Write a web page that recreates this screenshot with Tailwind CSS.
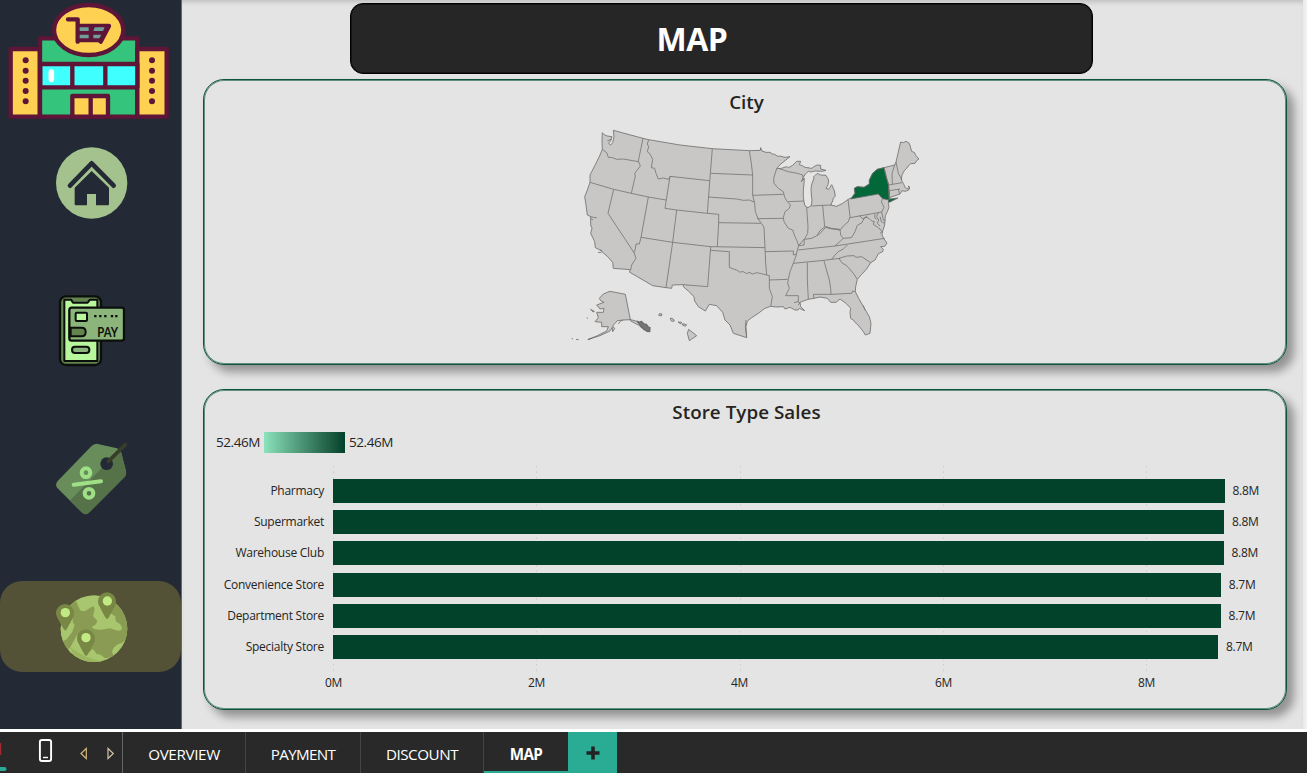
<!DOCTYPE html>
<html lang="en">
<head>
<meta charset="utf-8">
<title>Map</title>
<script src="https://cdn.jsdelivr.net/npm/@tailwindcss/browser@4"></script>
</head>
<body class="w-[1307px] h-[773px] overflow-hidden flex flex-col bg-white font-['Open_Sans','Noto_Sans',sans-serif] text-[#252423]">
<div class="flex h-[729px] bg-[#e4e4e4]">
  <aside class="w-[182px] shrink-0 bg-[#232a35] border-r border-[#666b72] flex flex-col items-center">
    <!-- store -->
    <svg class="w-[181px] h-[125px] shrink-0" viewBox="0 0 543 375">
      <g stroke="#5e1537" stroke-width="13" stroke-linejoin="round">
        <path fill="#34c47c" d="M120 115H412V350H120z"/>
        <path fill="#ffd152" d="M32 147H119V350H32zM412 147H500V350H412z"/>
        <path fill="#3fffff" d="M121 192H412V262H121z"/>
        <path d="M217 192V262M316 192V262" />
        <path fill="#ffd152" d="M217 288H324V350H217zM272 288V350"/>
        <ellipse cx="266" cy="90" rx="104" ry="75" fill="#ffd152"/>
      </g>
      <path d="M154 216V238" stroke="#fff" stroke-width="17" stroke-linecap="round"/>
      <path d="M204 58H233V125M238 78H327L302 125M233 120H305" fill="none" stroke="#5e1537" stroke-width="13" stroke-linecap="round" stroke-linejoin="round"/>
      <path d="M233 76H327L305 124H233z" fill="#5e1537"/>
      <path d="M239 82H266V93H239zM284 82H314L309 93H280zM239 104H266V115H239zM280 104H304L298 115H280z" fill="#709d97"/>
      <g fill="#5e1537"><circle cx="77" cy="181" r="9"/><circle cx="77" cy="212" r="9"/><circle cx="77" cy="242" r="9"/><circle cx="77" cy="273" r="9"/><circle cx="77" cy="304" r="9"/><circle cx="456" cy="181" r="9"/><circle cx="456" cy="212" r="9"/><circle cx="456" cy="242" r="9"/><circle cx="456" cy="273" r="9"/><circle cx="456" cy="304" r="9"/></g>
    </svg>
    <!-- home -->
    <svg class="w-[110px] h-[100px] mt-[10px] shrink-0 ml-[9px]" viewBox="0 0 330 300">
      <circle cx="155" cy="144" r="107" fill="#a4c28e"/>
      <path d="M90 152L155 85L221 152" fill="none" stroke="#232a35" stroke-width="14" stroke-linecap="round" stroke-linejoin="round"/>
      <path d="M104 158L155 108L207 158V208Q207 211 204 211H168V177H141V211H107Q104 211 104 208z" fill="#232a35"/>
    </svg>
    <!-- pay -->
    <svg class="w-[95px] h-[90px] mt-[50px] shrink-0 ml-[3px]" viewBox="0 0 285 270">
      <rect x="45" y="34" width="123" height="206" rx="18" fill="#64844f" stroke="#0b0f0b" stroke-width="7"/>
      <path d="M58 44H78L84 53H128L135 44H157V228H58z" fill="#b9f79d" stroke="#0b0f0b" stroke-width="6" stroke-linejoin="round"/>
      <rect x="73" y="68" width="164" height="99" rx="7" fill="#8bb57b" stroke="#0b0f0b" stroke-width="7"/>
      <rect x="92" y="83" width="34" height="25" rx="3" fill="#b9f79d" stroke="#0b0f0b" stroke-width="6"/>
      <path d="M77 128H110Q122 128 122 141Q122 154 110 154H77z" fill="#64844f" stroke="#0b0f0b" stroke-width="6"/>
      <rect x="81" y="185" width="52" height="19" rx="9" fill="#8bb57b" stroke="#0b0f0b" stroke-width="6"/>
      <path d="M151 90V97M166 90V97M181 90V97M201 90V97M214 90V97" stroke="#0b0f0b" stroke-width="7"/>
      <text x="157" y="156" font-size="41" font-weight="700" font-family="Lato" textLength="62" lengthAdjust="spacingAndGlyphs" fill="#0b0f0b">PAY</text>
    </svg>
    <!-- discount -->
    <svg class="w-[95px] h-[90px] mt-[60px] shrink-0 ml-[3px]" viewBox="0 0 285 270">
      <path d="M155 26L216 40Q226 44 229 54L243 109Q245 119 238 127L134 231Q123 244 110 232L37 159Q29 149 38 138L139 34Q146 26 155 26z" fill="#688d5a"/>
      <path d="M222 46Q228 49 229 54L243 109Q245 119 238 127L134 231Q123 244 110 232L76 196z" fill="#557249"/>
      <circle cx="185" cy="86" r="19" fill="#232a35"/>
      <path d="M190 79L241 29" stroke="#373e2a" stroke-width="11" stroke-linecap="round"/>
      <g fill="none" stroke="#9fe087"><circle cx="123" cy="113" r="13" stroke-width="12"/><circle cx="132" cy="175" r="13" stroke-width="12"/><path d="M86 149L168 139" stroke-width="12" stroke-linecap="round"/></g>
    </svg>
    <!-- map, selected page -->
    <div class="w-[181px] h-[91px] mt-[56px] shrink-0 rounded-[22px] bg-[#535136] overflow-hidden">
      <svg class="w-[181px] h-[92px]" viewBox="0 33 543 276">
        <defs><clipPath id="globe"><circle cx="282" cy="176" r="100"/></clipPath></defs>
        <g clip-path="url(#globe)">
          <path fill="#a7c66d" d="M170 70H390V280H170z"/>
          <path fill="#8a9b54" d="M196 88L228 94L240 120Q252 129 264 118L280 108L284 117L279 138L292 153Q290 165 275 170Q280 180 302 179L330 175Q352 185 363 181Q371 170 357 160Q342 153 347 140L332 130V70L400 120V200L380 207L365 219Q340 225 336 246L342 260L315 265L302 254H291L278 237L258 257L230 210L196 250L178 210L200 180L219 159L215 120z"/>
          <path fill="#a7c66d" d="M217 156L224 165L217 185L200 208L185 215L180 175zM232 193L208 237L195 242L240 275L315 270Q302 252 291 253L278 237L258 257z"/>
          <path fill="#9cb660" d="M210 232L260 262L310 276H230z"/>
        </g>
        <g fill="#798745"><path d="M196 182Q192 180 187 170L172 143Q168 137 168 129A27 27 0 01222 129Q222 138 219 143L204 170Q200 180 196 182z"/><path id="pin" d="M321 147Q317 145 312 135L298 108Q294 102 294 94A27 27 0 01348 94Q348 103 345 108L330 135Q326 145 321 147z"/><use href="#pin" x="-63" y="111"/></g>
        <g fill="#c2ea84"><circle cx="196" cy="128" r="14"/><circle cx="322" cy="93" r="14"/><circle cx="258" cy="203" r="14"/></g>
      </svg>
    </div>
  </aside>

  <main class="w-[1121px] shrink-0 flex flex-col pl-[21px] shadow-[inset_0_5px_5px_-3px_#bdbdbd]">
    <header class="ml-[147px] mt-[3px] w-[743px] h-[71px] shrink-0 rounded-[13px] bg-[#262626] border border-black shadow-[inset_0_0_0_1px_rgba(0,0,0,0.4)] flex items-center justify-center pr-[59px]">
      <h1 class="text-white font-bold text-[32px] tracking-[-0.5px]">MAP</h1>
    </header>

    <section class="mt-[5px] w-[1084px] h-[286px] shrink-0 rounded-[21px] border border-[#0e563b] bg-[#e4e4e4] shadow-[7px_7px_10px_rgba(0,0,0,0.36),inset_0_0_0_1px_rgba(14,86,59,0.6)]">
      <h2 class="text-center font-semibold text-[18.8px] leading-[26px] mt-[9px] pl-[3px]">City</h2>
      <svg class="w-[400px] h-[230px] ml-[351px] mt-[0px]" viewBox="-45 -15 1200 690">
        <g fill="#c8c7c6" stroke="#6c6b69" stroke-width="2.4" stroke-linejoin="round">
          <path d="M97 38L104 45L112 48L126 50L122 62L116 70L122 75L128 68L132 50L130 31L219 55L236 59L330 75L427 86L538 92L571 91L572 83L576 93L588 97L600 97L607 102L614 103L623 109L630 108L645 112L660 110L645 122L630 134L620 146L634 145L650 140L656 143L668 136L680 124L692 124L688 134L697 137L705 142L725 145L735 138L742 135L752 136L752 147L768 151L756 154L735 153L722 156L715 154L706 162L700 172L694 185L703 175L702 190L700 210L700 232L702 245L705 258L714 263L724 256L726 240L724 225L723 205L726 190L732 175L730 171L737 165L742 160L752 165L768 166L776 180L774 195L768 205L776 208L785 194L793 212L796 228L790 235L788 243L782 255L800 259L818 250L835 238L845 233L855 220L853 205L862 200L882 202L898 192L898 180L908 160L922 148L942 143L974 135L978 126L984 100L992 66L1000 68L1008 64L1018 70L1025 94L1034 98L1036 105L1047 117L1040 122L1035 130L1022 131L1015 138L1010 145L1003 152L996 165L994 180L1000 190L1006 203L1016 208L1018 200L1014 198L1019 204L1015 211L1005 214L996 212L990 222L960 232L958 240L955 250L957 262L952 275L946 287L944 315L938 333L936 345L942 357L951 369L944 379L932 380L940 388L938 395L925 401L915 420L902 428L890 447L875 463L862 478L857 500L856 515L866 535L882 563L898 590L903 610L900 640L886 645L880 635L872 625L863 614L855 607L850 600L842 595L840 577L842 565L828 550L810 537L798 547L782 547L772 535L750 531L732 535L715 538L700 543L690 547L692 560L704 572L694 568L688 565L684 570L675 570L660 562L645 567L640 560L620 561L602 559L585 565L578 570L565 580L545 593L532 603L528 620L530 653L490 640L480 615L465 600L458 577L440 557L418 553L406 573L385 560L374 543L372 530L355 513L340 500L340 494L307 495L305 505L288 503L248 497L178 456L182 449L130 445L128 427L113 410L90 390L76 383L74 365L62 340L66 325L62 315L62 290L52 285L48 255L44 230L52 210L60 187L60 165L78 130L90 105L97 88L96 65z"/>
          <path d="M166 523L120 514L112 517L100 522L88 535L92 542L102 547L80 555L90 567L102 565L100 577L80 577L85 593L75 605L95 607L95 620L115 620L110 633L80 648L55 658L90 647L120 633L127 622L128 635L134 626L128 618L135 610L142 602L160 600L182 599L205 605L238 627L232 635L205 615L182 603z"/>
          <path d="M202 604L210 607L214 604L222 612L229 613L235 621L240 623L239 635L230 633L222 628L213 620L208 612z" fill="#777674" stroke-width="4"/>
          <path d="M356 628L380 647L358 662L352 640zM268 581L276 582L274 588L266 586zM302 594L310 597L313 603L305 604L301 598zM324 606L335 607L332 612zM338 611L350 614L346 619L337 615zM62 568L73 574L69 576zM5 655L9 657M18 658L26 659M53 659L66 655M84 397L94 398M50 594L54 595"/>
          <path fill="#02683a" d="M842 237L855 220L853 205L862 200L882 202L898 192L898 180L908 160L922 148L942 143L950 175L956 195L958 237L984 234L958 247L954 243L957 240L938 236L925 222z"/>
        </g>
        <g fill="none" stroke="#737271" stroke-width="2.4" stroke-linejoin="round">
          <path d="M219 55L205 123L211 138L194 160L196 168L184 220M97 88L110 98L115 112L128 113L140 118L160 117L205 125M60 187L131 208L184 220L235 231L288 240M236 59L232 72L236 80L232 95L240 102L248 118L244 143L254 145L258 160L265 177L280 174L296 178L300 169L418 182M427 86L421 160L412 280M300 169L285 265L320 270L412 280L446 283L446 308L572 310M422 160L548 165M415 231L500 237L520 241L538 240L552 246M131 208L114 280L192 398M235 231L213 352L208 372L198 372L196 387L192 398L198 415L185 435L182 449M320 270L308 367L288 503M213 352L308 367L422 380L540 382L585 383M446 308L442 380M422 380L413 500L340 494M422 391L478 395L478 442L490 447L500 450L509 456L520 455L530 461L537 457L548 462L560 458L574 461L590 465L598 467L598 505L607 530L602 559M62 290L70 292L80 293M62 295L69 300M112 62L120 60L126 56"/>
          <path d="M538 92L544 130L548 165L548 226L640 223M620 146L614 165L611 175L612 190L625 205L640 215L644 232L652 245L661 255L658 265L645 275L640 292L642 305L655 325L668 330L675 350L682 365L686 377M548 226L554 250L556 275L564 296L574 310L582 322L585 383L587 430L590 465M562 296L640 295M655 245L702 243M628 146L655 155L682 160L698 165L700 180M710 262L714 320L713 340L705 355L700 360L686 377M724 258L758 256L785 255M758 256L764 320L775 325L795 328L810 330L820 318L835 305L840 290L834 238M764 320L750 332L742 345M840 293L935 276L942 262L934 245L938 235M935 276L940 300L946 303M942 143L950 175L956 195L958 240M974 135L966 160L967 193M978 126L985 160L996 180M956 195L996 188M958 212L990 207M986 207L988 222M958 212L958 235"/>
          <path d="M686 377L702 375L703 358L725 355L745 345L760 330L768 320L785 325L810 328L812 345L820 355L845 353L855 335L862 316L876 308L882 295L892 288M685 390L710 387L795 378L944 355M820 355L808 366L795 378M670 430L762 421L785 418L810 415M832 375L820 387L805 395L795 405L785 418M807 415L830 408L852 407L858 412L875 410L902 428M807 415L815 428L830 437L840 448L850 460L862 478M762 423L778 480L782 505L783 523L730 523L732 535M783 523L845 520L848 513L856 515M712 428L712 480L715 538M686 377L682 390L678 408L668 435L660 455L655 478L653 490L658 505L647 527L685 527L685 545M585 395L670 393L670 405L678 403M598 480L653 478"/>
          <path d="M868 287L878 296L888 292L897 295L905 303L913 305L910 313L925 323L930 328M925 278L920 290L926 300L922 310L930 318M930 290L934 305L943 310M915 282L914 293L920 298M928 325L936 335L930 340M672 548L682 545L690 549L684 555M880 556L885 570M528 600L526 622L530 650M160 600L152 603L145 612M90 390L97 392"/>
        </g>
      </svg>
    </section>

    <section class="mt-[24px] w-[1084px] h-[321px] shrink-0 rounded-[21px] border border-[#0e563b] bg-[#e4e4e4] shadow-[7px_7px_10px_rgba(0,0,0,0.36),inset_0_0_0_1px_rgba(14,86,59,0.6)] flex flex-col">
      <h2 class="text-center font-semibold text-[18.8px] leading-[26px] mt-[9px] pl-[3px] tracking-[0.05px]">Store Type Sales</h2>
      <div class="flex items-center h-[21px] mt-[7px] ml-[12px] text-[13.500px] tracking-[-0.45px]">
        <span class="w-[48px]">52.46M</span>
        <span class="w-[81px] h-[21px] bg-linear-to-r from-[#8be3bc] to-[#02422b]"></span>
        <span class="ml-[4px]">52.46M</span>
      </div>
      <div class="relative mt-[13px] h-[230px] text-[12px] tracking-[-0.26px]">
        <svg class="absolute left-px top-0 w-[1080px] h-[206px]" viewBox="0 0 1080 206"><path d="M128.500 0V206M331.500 0V206M535.500 0V206M738.500 0V206M941.500 0V206" stroke="#cccccc" stroke-dasharray="1.500 4"/></svg>
        <div id="bars" class="relative pt-[13px] pl-px flex flex-col gap-[7.200px]"></div>
        <div class="absolute top-[209px] left-[79px] flex text-[12px] leading-[16px] text-center">
          <span class="w-[101px]">0M</span><span class="w-[101px] ml-[102px]">2M</span><span class="w-[101px] ml-[102px]">4M</span><span class="w-[101px] ml-[103px]">6M</span><span class="w-[101px] ml-[102px]">8M</span>
        </div>
      </div>
    </section>
  </main>
  <div class="flex-1 bg-linear-to-r from-[#e9e9e9] to-[#f2f2f2]"></div>
</div>

<nav class="mt-[3px] h-[41px] shrink-0 bg-[#292929] flex text-white text-[15.200px]">
  <div class="w-[123px] border-r border-[#666] shrink-0">
    <svg class="w-[122px] h-[41px]" viewBox="0 0 122 41">
      <path d="M0 11H1.200V23H0z" fill="#a32a2c"/><path d="M0 35H4.500A1.500 1.500 0 014.500 39H0z" fill="#2aab93"/>
      <rect x="39.900" y="8" width="11.200" height="21" rx="2" fill="none" stroke="#fff" stroke-width="1.900"/><path d="M43 25.500H48" stroke="#fff" stroke-width="1.400"/>
      <path d="M86.300 16.500V26.500L81 21.500z" fill="none" stroke="#d5b67c" stroke-width="1.200"/><path d="M108 16.500V26.500L113.300 21.500z" fill="none" stroke="#d0c4a8" stroke-width="1.200"/>
    </svg>
  </div>
  <div class="w-[123px] border-r border-[#444] flex items-center justify-center pt-[4px] tracking-[-0.35px]">OVERVIEW</div>
  <div class="w-[115px] border-r border-[#444] flex items-center justify-center pt-[4px] tracking-[-0.65px]">PAYMENT</div>
  <div class="w-[123px] border-r border-[#444] flex items-center justify-center pt-[4px] tracking-[-0.45px]">DISCOUNT</div>
  <div class="w-[84px] border-b-2 border-[#2aab93] flex items-center justify-center pt-[6px] font-bold tracking-[-0.6px]">MAP</div>
  <div class="w-[49px] bg-[#2aab93] flex items-center justify-center"><svg class="w-[14px] h-[14px]" viewBox="0 0 14 14"><path d="M7 0.500V13.500M0.500 7H13.500" stroke="#222" stroke-width="3.600"/></svg></div>
</nav>
<script>
const rows = [["Pharmacy", 891.5, "8.8M"], ["Supermarket", 891, "8.8M"], ["Warehouse Club", 890.5, "8.8M"], ["Convenience Store", 887.8, "8.7M"], ["Department Store", 887.6, "8.7M"], ["Specialty Store", 885, "8.7M"]];
document.getElementById("bars").innerHTML = rows.map(([n, w, v], i) => `<div class="flex items-center h-[24px]"><span class="w-[119px] text-right whitespace-nowrap ${i > 2 ? "pt-[1px]" : ""}">${n}</span><span class="ml-[9px] h-[24px] bg-[#02422b]" style="width:${w}px"></span><span class="ml-[8px] ${i > 2 ? "pt-[1px]" : ""}">${v}</span></div>`).join("");
</script>
</body>
</html>
